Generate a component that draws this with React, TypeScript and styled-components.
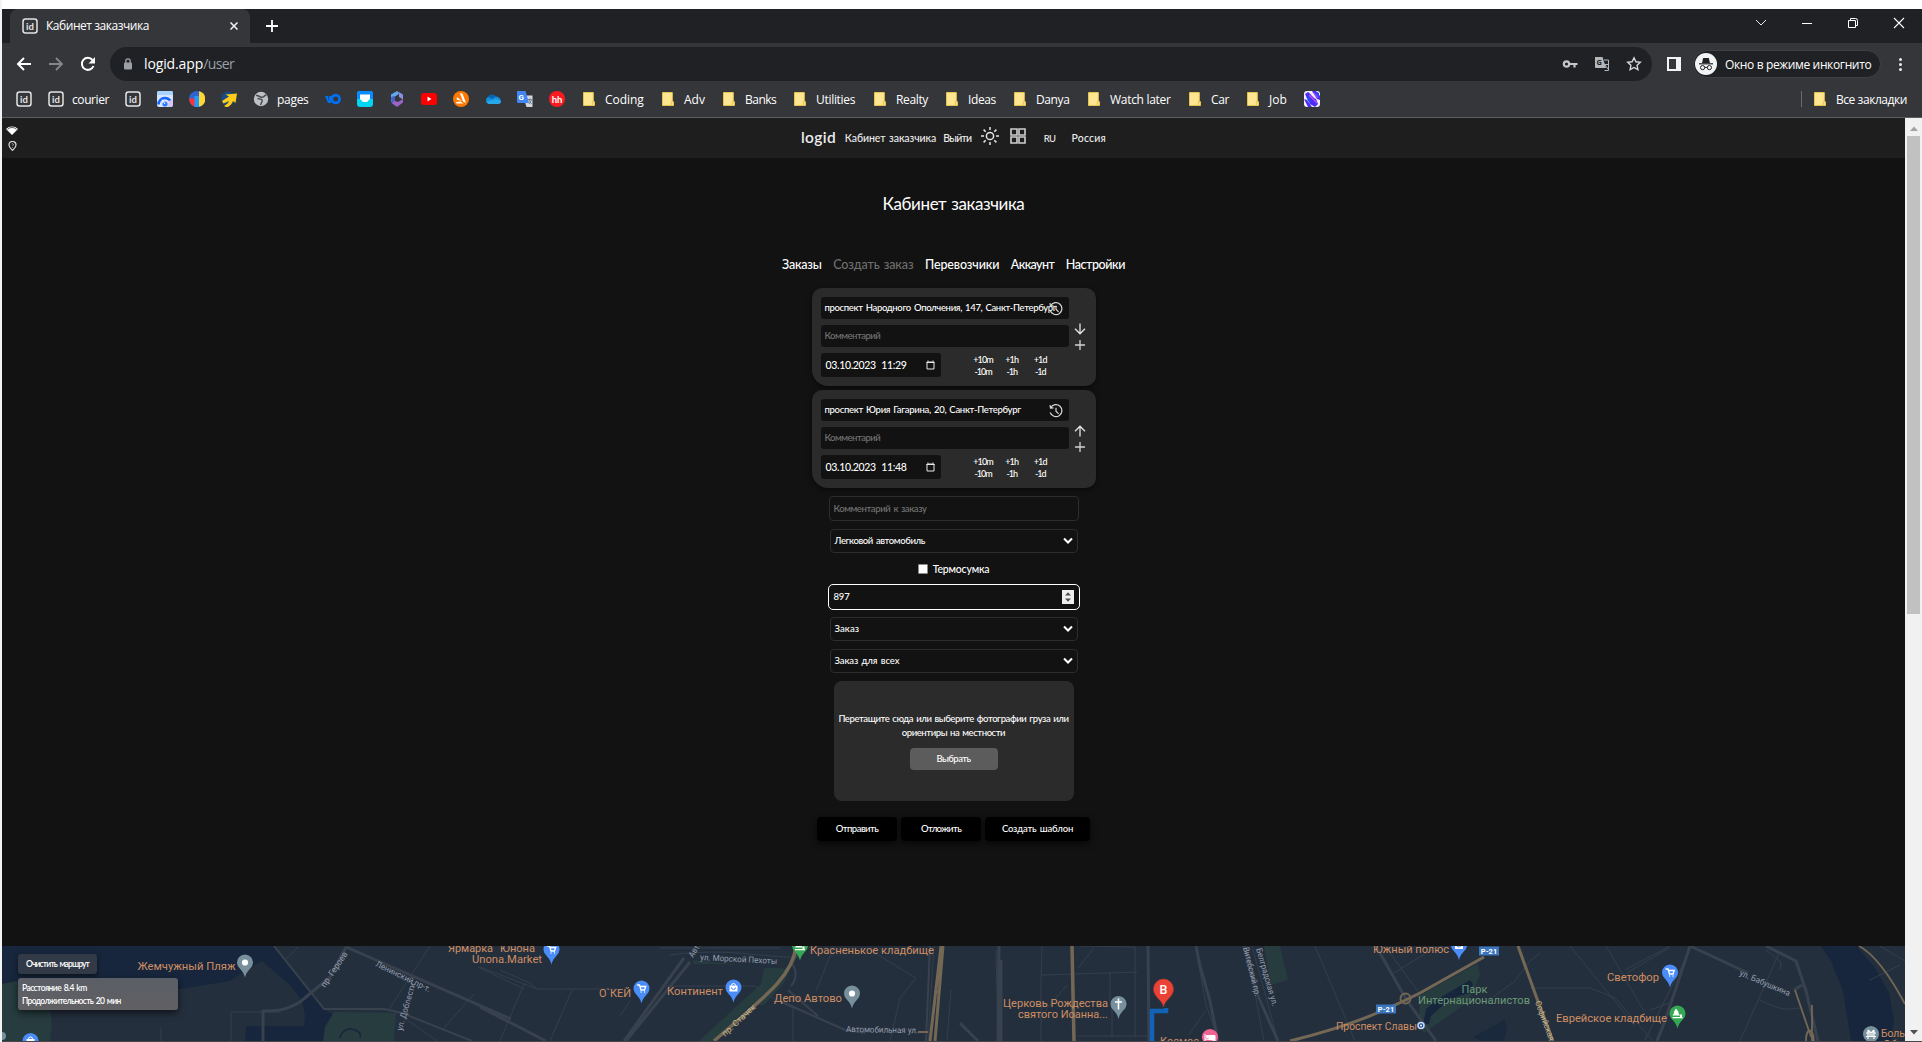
import React from "react";
import styled, { createGlobalStyle, css } from "styled-components";

const UI = '"Open Sans", "Noto Sans", sans-serif';
const GEO = 'Lato, "Open Sans", sans-serif';

const Global = createGlobalStyle`
  *, *::before, *::after { box-sizing: border-box; }
  html, body { margin: 0; background: #fff; overflow: hidden; }
  button { font: inherit; color: inherit; border: 0; background: none; padding: 0; margin: 0; }
  svg { display: block; flex: none; }
`;

const Window = styled.div`
  width: 1922px;
  height: 1042px;
  padding: 9px 0 0 2px;
  background: linear-gradient(90deg, #f3f3f3 2px, #fff 2px);
  display: flex;
  flex-direction: column;
  font-family: ${UI};
  color: #fff;
`;

const Text = styled.span<{ $size: number; $track?: number; $gap?: number; $w?: number; $color?: string }>`
  font-size: ${(p) => p.$size}px;
  letter-spacing: ${(p) => p.$track ?? 0}px;
  word-spacing: ${(p) => p.$gap ?? 0}px;
  color: ${(p) => p.$color ?? "inherit"};
  white-space: nowrap;
  ${(p) => p.$w && css`width: ${p.$w}px;`}
`;

/* ---------- browser chrome ---------- */

const TabStrip = styled.div`
  height: 34px;
  flex: none;
  background: #202124;
  display: flex;
  align-items: flex-start;
  padding-left: 8px;
`;

const Tab = styled.div`
  width: 240px;
  height: 34px;
  border-radius: 8px 8px 0 0;
  background: #35363a;
  display: flex;
  align-items: center;
  padding: 0 12px;
  gap: 8px;
`;

const TabTitle = styled(Text)`
  flex: 1;
  padding-bottom: 1px;
`;

const NewTab = styled.button`
  margin: 11px 0 0 16px;
`;

const WindowButtons = styled.div`
  margin: 7px 17px 0 auto;
  display: flex;
  gap: 34px;
  align-items: center;
`;

const Toolbar = styled.div`
  height: 38px;
  flex: none;
  background: #35363a;
  display: flex;
  align-items: center;
  padding: 4px 16px 0 14px;
`;

const NavButtons = styled.div`
  display: flex;
  gap: 16px;
  width: 94px;
`;

const Omnibox = styled.div`
  width: 1542px;
  height: 34px;
  border-radius: 17px;
  background: #202124;
  display: flex;
  align-items: center;
  padding: 0 10px 0 13px;
`;

const Url = styled.div`
  margin-left: 11px;
  padding-bottom: 1px;
  display: flex;
  flex: 1;
`;

const OmniIcons = styled.div`
  display: flex;
  gap: 16px;
  align-items: center;
`;

const SidePanel = styled.div`
  width: 14px;
  height: 14px;
  margin-left: 15px;
  border: 2px solid #f1f3f4;
  border-right-width: 5px;
`;

const Incognito = styled.div`
  height: 28px;
  width: 188px;
  margin-left: 12px;
  border: 1px solid #3f4043;
  border-radius: 14px;
  background: #202124;
  display: flex;
  align-items: center;
  gap: 8px;
`;

const Avatar = styled.div`
  width: 22px;
  height: 22px;
  margin-left: 1px;
  border-radius: 50%;
  background: #f1f3f4;
  display: grid;
  place-items: center;
`;

const Dots = styled.div`
  margin-left: auto;
  width: 4px;
  display: grid;
  gap: 2px;
  margin-right: 3px;
`;

const Dot = styled.i`
  width: 3px;
  height: 3px;
  border-radius: 50%;
  background: #e8eaed;
`;

const Bookmarks = styled.div`
  height: 37px;
  flex: none;
  background: #35363a;
  border-bottom: 1px solid #5c5d60;
  display: flex;
  align-items: center;
  gap: 16px;
  padding: 0 15px 0 14px;
`;

const Bookmark = styled.div`
  display: flex;
  align-items: center;
  gap: 8px;
`;

const AllBookmarks = styled.div`
  margin-left: auto;
  height: 16px;
  border-left: 1px solid #6a6b6e;
  padding-left: 10px;
  display: flex;
  align-items: center;
  gap: 8px;
`;

/* ---------- page ---------- */

const Viewport = styled.div`
  height: 924px;
  flex: none;
  display: flex;
  background: #121212;
  border-bottom: 1px solid #45474a;
`;

const Page = styled.div`
  width: 1903px;
  position: relative;
  display: flex;
  flex-direction: column;
  align-items: center;
  font-family: ${GEO};
  font-weight: 500;
`;

const Header = styled.header`
  width: 100%;
  height: 40px;
  flex: none;
  background: #1e1e1e;
  display: flex;
  justify-content: center;
  align-items: center;
  color: #ececec;
`;

const Status = styled.div`
  position: absolute;
  left: 4px;
  top: 8px;
  display: grid;
  gap: 6px;
  justify-items: center;
`;

const HeaderNav = styled.nav`
  display: flex;
  align-items: center;
  width: 305px;
  height: 40px;
`;

const Logo = styled(Text)`
  width: 44px;
  font-weight: 600;
  padding-bottom: 3px;
`;

const NavText = styled(Text)`
  padding-bottom: 1px;
`;

const NavIcon = styled.span<{ $w: number }>`
  width: ${(p) => p.$w}px;
  padding-bottom: 4px;
`;

const Lang = styled.button`
  width: 36px;
  padding: 0 0 0 8px;
  display: flex;
`;

const Title = styled.h1`
  margin: 34px 0 0;
  height: 24px;
  font: 400 17px/24px ${GEO};
  letter-spacing: -0.4px;
  word-spacing: 1px;
`;

const Tabs = styled.nav`
  margin-top: 38px;
  width: 343px;
  height: 21px;
  display: flex;
  align-items: center;
  justify-content: space-between;
`;

const Stops = styled.div`
  margin-top: 13px;
  display: grid;
  gap: 4px;
`;

const Stop = styled.section`
  width: 284px;
  height: 98px;
  padding: 9px 10px 9px 9px;
  border-radius: 10px 10px 10px 16px;
  background: #2b2b2b;
  box-shadow: 0 2px 5px rgba(0, 0, 0, 0.5);
  display: flex;
  gap: 5px;
`;

const StopFields = styled.div`
  width: 248px;
  display: flex;
  flex-direction: column;
  gap: 6px;
`;

const StopSide = styled.div`
  width: 12px;
  padding-top: 26px;
  display: grid;
  gap: 4px;
  align-content: start;
`;

const Field = styled.div`
  position: relative;
  height: 22px;
  border-radius: 3px;
  background: #121212;
  display: flex;
  align-items: center;
  padding: 0 4px 2px;
`;

const HistoryIcon = styled.span`
  position: absolute;
  right: 6px;
  top: 5px;
`;

const DateRow = styled.div`
  display: flex;
  align-items: center;
`;

const DateField = styled(Field)`
  width: 120px;
  height: 24px;
  justify-content: space-between;
  padding: 0 6px 1px 5px;
`;

const Shifts = styled.div`
  margin: 0 0 -2px 28px;
  display: grid;
  grid-template-columns: 29px 28.5px 28.5px;
  justify-items: center;
  line-height: 12.5px;
`;

const Form = styled.div`
  margin-top: 8px;
  width: 252px;
  display: flex;
  flex-direction: column;
  align-items: center;
`;

const Outlined = styled.div<{ $w: number; $h: number; $mt: number; $focus?: boolean }>`
  width: ${(p) => p.$w}px;
  height: ${(p) => p.$h}px;
  margin-top: ${(p) => p.$mt}px;
  border: ${(p) => (p.$focus ? "1.5px solid #fff" : "1px solid #2d2d2d")};
  border-radius: ${(p) => (p.$focus ? 5 : 4)}px;
  display: flex;
  align-items: center;
  justify-content: space-between;
  padding: ${(p) => (p.$focus ? "0 5px 1px" : "0 4px 1px")};
`;

const CheckLabel = styled.label`
  margin-top: 6px;
  height: 20px;
  display: flex;
  align-items: center;
  gap: 5px;
`;

const Box = styled.span`
  width: 10px;
  height: 10px;
  border-radius: 1px;
  background: #fff;
  border: 1px solid #8a8a8a;
`;

const Spinner = styled.span`
  width: 12px;
  height: 14px;
  background: #efefef;
  display: grid;
  place-items: center;
  margin-top: 1px;
`;

const Drop = styled.section`
  margin-top: 8px;
  width: 240px;
  height: 120px;
  border-radius: 8px;
  background: #2b2b2b;
  display: flex;
  flex-direction: column;
  align-items: center;
  padding-top: 31px;
  line-height: 14px;
`;

const Pick = styled.button`
  margin-top: 8px;
  width: 88px;
  height: 22px;
  padding-bottom: 1px;
  border-radius: 4px;
  background: #5c5c5c;
  display: flex;
  align-items: center;
  justify-content: center;
`;

const Actions = styled.div`
  margin-top: 16px;
  display: flex;
  gap: 4px;
`;

const Action = styled.button<{ $w: number }>`
  width: ${(p) => p.$w}px;
  height: 24px;
  padding-bottom: 1px;
  border-radius: 4px;
  background: #000;
  box-shadow: 0 3px 6px rgba(0, 0, 0, 0.6);
  display: flex;
  align-items: center;
  justify-content: center;
`;

const MapPane = styled.div`
  margin-top: auto;
  width: 1903px;
  height: 95px;
  flex: none;
  position: relative;
  overflow: hidden;
`;

const MapControls = styled.div`
  position: absolute;
  left: 16px;
  top: 8px;
  display: flex;
  flex-direction: column;
  align-items: flex-start;
  gap: 4px;
  font-weight: 600;
`;

const ClearRoute = styled.button`
  width: 79px;
  height: 20px;
  border-radius: 3px;
  background: #323a47;
  box-shadow: 0 2px 5px rgba(0, 0, 0, 0.5);
  display: flex;
  align-items: center;
  justify-content: center;
`;

const RouteInfo = styled.div`
  width: 160px;
  height: 32px;
  padding: 4px;
  border-radius: 3px;
  background: linear-gradient(#5a5e66, #616063);
  box-shadow: 0 3px 7px rgba(0, 0, 0, 0.6);
  display: grid;
  line-height: 12.500px;
`;

const Scrollbar = styled.div`
  width: 17px;
  background: #f1f1f1;
  display: flex;
  flex-direction: column;
  align-items: center;
  padding: 8px 0 6px;
`;

const Thumb = styled.div`
  width: 13px;
  height: 478px;
  margin: 5px 0 auto;
  background: #c1c1c1;
`;

/* ---------- icons ---------- */

const IdIcon = () => (
  <svg width="16" height="16" viewBox="0 0 16 16">
    <rect x="1" y="1" width="14" height="14" rx="2.500" fill="none" stroke="#e4e4e4" strokeWidth="1.500" />
    <text x="8" y="11.500" textAnchor="middle" fontFamily="Lato, sans-serif" fontWeight="700" fontSize="9.500" fill="#e4e4e4">id</text>
  </svg>
);

const Folder = () => (
  <svg width="16" height="16" viewBox="0 0 16 16">
    <path d="M2.500 1.500h9.800v9.200h1.200v3.800h-11z" fill="#ffe693" stroke="#e6c34f" />
    <path d="M11.300 14v-3.200h2" stroke="#e6c34f" fill="none" />
  </svg>
);

const marks: Record<string, React.ReactNode> = {
  gauge: (
    <>
      <rect width="16" height="16" rx="2" fill="#d7e6fb" />
      <path d="M0 2a2 2 0 0 1 2-2h12a2 2 0 0 1 2 2v2H0z" fill="#a9d2ff" />
      <path d="M1.500 13.500a6.500 6.500 0 0 1 13 0" fill="none" stroke="#1463ff" strokeWidth="2.600" />
      <path d="M12 10l4-2v6l-3 2h-2z" fill="#d9c4f7" />
      <circle cx="8" cy="13" r="2.600" fill="#2a7cff" />
      <path d="M8 13 5 8.500" stroke="#fff" />
    </>
  ),
  metrika: (
    <>
      <circle cx="8" cy="8" r="8" fill="#3065cf" />
      <path d="M10 .2a8 8 0 0 1 0 15.600z" fill="#ffd633" />
      <path d="M.2 7.500H6v8.200A8 8 0 0 1 .2 7.500z" fill="#ff3333" />
      <path d="M5.500 5h4.500v11H5.500z" fill="#1f9bff" />
    </>
  ),
  arrow: (
    <>
      <circle cx="7" cy="7.500" r="7" fill="#174a80" />
      <path d="M4.500 3.500l11.500-1-1.500 9.500-2.500-2c-1 3-3 5-6 6.500L3 15c3-1.500 4-3 5-5l-5.500 2.500L1 10l7-4.500z" fill="#ffcc1a" />
    </>
  ),
  globe: (
    <>
      <circle cx="8" cy="8" r="7.200" fill="#bdc1c6" />
      <path d="M3 4.500c3.500-.5 3 2 6 1.800s2-2.300 4.500-2.300M4.500 7.500c3 .5 5.500.5 4.500 3l-1.500 3.500" fill="none" stroke="#4a4b4f" strokeWidth="1.500" />
    </>
  ),
  yoo: (
    <>
      <path d="M0 5h3l1 6V5h2v7H3z" fill="#0070f0" />
      <circle cx="10.700" cy="8" r="3.900" fill="none" stroke="#0070f0" strokeWidth="2.800" />
    </>
  ),
  mail: (
    <>
      <rect width="16" height="16" rx="3" fill="#00d5f2" />
      <path d="M0 8V3a3 3 0 0 1 3-3h10a3 3 0 0 1 3 3v5z" fill="#0a8bff" />
      <path d="M3 3.500h10v4.500l-3 3H6L3 8z" fill="#fff" />
    </>
  ),
  m365: (
    <>
      <path d="M8 0 2 3.500v7L6 13V5.500L10 3z" fill="#62a8ef" />
      <path d="M8 0l6 3.500v5L10 6V3z" fill="#8b8fe0" />
      <path d="M14 8v3.500L8 16 2.500 12 6 10l3 1 5-3z" fill="#9a63c9" />
      <path d="M2 6l4-1v5l-3.500 2z" fill="#4660c9" />
    </>
  ),
  youtube: (
    <>
      <rect y="2" width="16" height="12" rx="3" fill="#f00" />
      <path d="M6.500 5.500v5l4-2.500z" fill="#fff" />
    </>
  ),
  avast: (
    <>
      <circle cx="8" cy="8" r="8" fill="#ff7800" />
      <path d="M7 2.500c1.500-.5 2.500 0 3 1.500l3 8-3-1.500zM4 6l5 4-5.500-1.500zM3 11l4.500-.5 3 2H3.500z" fill="#fff" />
    </>
  ),
  cloud: (
    <>
      <path d="M3.500 12.500A3.500 3.500 0 0 1 3 6a5 5 0 0 1 8-.5c3 0 5 3 5 4.500s-1 3-3 3z" fill="#1490df" />
      <path d="M3 6a5 5 0 0 1 8-.5L7 8z" fill="#0364b8" />
      <path d="M1 11l10-3 5 2c0 2-1 3-3 3H3.500z" fill="#28a8ea" />
    </>
  ),
  translate: (
    <>
      <path d="M6 4.500h9.500V16H9.500z" fill="#d5d7da" />
      <path d="M0 0h8.500L12 12H1a1 1 0 0 1-1-1z" fill="#4285f4" />
      <text x="1.600" y="9" fontSize="8" fontWeight="700" fontFamily="Roboto, sans-serif" fill="#fff">G</text>
      <path d="M11 8.500h4M13 7.500v1M12 9l2.500 4M14.500 9L12 13" stroke="#6b7a86" fill="none" strokeWidth=".9" />
    </>
  ),
  hh: (
    <>
      <circle cx="8" cy="8" r="8" fill="#fc1a20" />
      <text x="8" y="11.500" textAnchor="middle" fontSize="9.500" fontFamily="Lato, sans-serif" fontWeight="700" fill="#fff">hh</text>
    </>
  ),
  swirl: (
    <>
      <rect width="16" height="16" rx="3" fill="#f3efff" />
      <path d="M1 3l3-2c3 2 5 6 8 7l2 5-3 3-5-3zM8 0h4l4 5v4l-3-1zM0 8l3 1 5 7H4z" fill="#4a2cf5" />
      <path d="M13 1l2 1v5l-3-3zM2 5l3 1 3 6-4-2z" fill="#2b49ff" />
      <path d="M5 4l8 8M10 2l4 5" stroke="#c04bff" strokeWidth="1.200" />
    </>
  ),
};

const Mark = ({ name }: { name: string }) => (
  <svg width="16" height="16" viewBox="0 0 16 16">{marks[name]}</svg>
);

const History = () => (
  <svg width="14" height="14" viewBox="0 0 14 14" fill="none" stroke="#d8d8d8" strokeWidth="1.200">
    <path d="M1.600 3.800A6 6 0 1 1 1.200 8.500M1 1.200l.5 3 3-.4M7 3.800v3.400l2.600 2.600" />
  </svg>
);

const Calendar = () => (
  <svg width="9" height="10" viewBox="0 0 9 10">
    <path d="M1 2h7v7H1zM.5 2.500h8" fill="none" stroke="#e8e8e8" />
    <path d="M2 0.500v1M7 0.500v1" stroke="#e8e8e8" />
  </svg>
);

const Arrow = ({ up }: { up?: boolean }) => (
  <svg width="12" height="12" viewBox="0 0 12 12" fill="none" stroke="#e4e4e4" strokeWidth="1.300">
    <path d={up ? "M6 11.500V1.500M1 6.200l5-5 5 5" : "M6 .5v10M1 5.800l5 5 5-5"} />
  </svg>
);

const Plus = () => (
  <svg width="12" height="12" viewBox="0 0 12 12">
    <path d="M6 1v10M1 6h10" stroke="#d4d4d4" strokeWidth="1.300" />
  </svg>
);

const Chevron = () => (
  <svg width="10" height="7" viewBox="0 0 10 7">
    <path d="M1 1.500l4 4 4-4" fill="none" stroke="#fff" strokeWidth="2" />
  </svg>
);

const Caret = ({ down }: { down?: boolean }) => (
  <svg width="8" height="5" viewBox="0 0 8 5">
    <path d={down ? "M0 0h8L4 4.500z" : "M0 5h8L4 .5z"} fill={down ? "#505050" : "#a3a3a3"} />
  </svg>
);

/* ---------- map ---------- */

type PinProps = { x: number; y: number; color: string; glyph: "cart" | "bag" | "dot" | "cross" | "tree" | "bed" | "bridge" };

const glyphs = {
  cart: <path d="M-4-3.500h2l1.500 5H3L4.200-2H-1M-.5 3.500h.1M3 3.500h.1" fill="none" stroke="#fff" strokeWidth="1.300" strokeLinecap="round" />,
  bag: (
    <>
      <rect x="-4" y="-2" width="8" height="6" fill="#fff" />
      <path d="M-2-2a2 2 0 0 1 4 0" fill="none" stroke="#fff" />
      <path d="M-2 0a2 2 0 0 0 4 0" fill="none" stroke="#4b8df8" />
    </>
  ),
  dot: <circle r="3.100" fill="#fff" />,
  cross: <path d="M0-5.500v11M-3.500-2h7" stroke="#fff" strokeWidth="1.500" />,
  tree: <path d="M-1.500-5l3 4h-1l2 3H-5l2-3h-1zM-5 3.500H5v1.200H-5zM2.500 1h2v3h-2z" fill="#fff" />,
  bed: <path d="M-5-3v7M-5 2H5v2M-3.500-1.500h2v2h-2zM-1-1.500h6V2h-6z" fill="#fff" stroke="#fff" />,
  bridge: <path d="M-5-1h10M-5 2.500h10M-3-4v9M3-4v9M-3-4l3 3 3-3M-1 0v2M1 0v2" fill="none" stroke="#fff" strokeWidth="1.200" />,
};

const Pin = ({ x, y, color, glyph }: PinProps) => (
  <g transform={`translate(${x} ${y})`}>
    <path d="M0 15C-1 11-2 9.500-5 6.200A8 8 0 1 1 5 6.200C2 9.500 1 11 0 15z" fill={color} />
    {glyphs[glyph]}
  </g>
);

const places: [string, number, number, number][] = [
  ["Жемчужный Пляж", 137.5, 970, 98],
  ["Ярмарка", 448, 952, 45],
  ["Юнона", 500, 952, 35],
  ["Unona.Market", 472, 963, 70],
  ["О`КЕЙ", 599, 996.5, 32],
  ["Континент", 667, 995, 56],
  ["Депо Автово", 774, 1001.5, 68],
  ["Красненькое кладбище", 810, 953.5, 124],
  ["Церковь Рождества", 1003, 1006.5, 105],
  ["святого Иоанна...", 1018, 1017.5, 90],
  ["Космос", 1160, 1045, 39],
  ["Южный полюс", 1373, 952.5, 76],
  ["Проспект Славы", 1336, 1029.5, 81],
  ["Светофор", 1607, 981, 52],
  ["Еврейское кладбище", 1556, 1021.5, 111],
  ["Боль", 1881, 1037, 24],
  ["Об", 1883, 1048, 14],
];

const streets: [string, number, number, number, number, string?][] = [
  ["пр. Героев", 325, 988, 41, -56],
  ["Ленинский пр-т.", 375, 966, 60, 26],
  ["ул. Доблести", 402, 1031, 49, -74],
  ["Авто", 693, 958, 17, -58],
  ["ул. Морской Пехоты", 700, 960, 77, 3],
  ["пр. Стачек", 725, 1037, 43, -43, "#c9b78f"],
  ["Автомобильная ул.", 846, 1032, 72, 1],
  ["Витебский пр.", 1243, 948, 50, 76],
  ["Белградская ул.", 1256, 949, 60, 74],
  ["Софийская", 1535, 1002, 42, 70, "#c9b78f"],
  ["ул. Бабушкина", 1739, 975, 54, 23],
];

const MapCanvas = () => (
  <svg width="1903" height="95" viewBox="2 946 1903 95" fontFamily="Roboto, sans-serif" fontWeight="400">
    <rect x="2" y="946" width="1903" height="95" fill="#242f3e" />
    <g fill="#17263c">
      <path d="M2 946h272l11 16 16 17 24 31 9 5-7 10v16h-82l1-15h58l1-10-3-15-12-16-28-24-14 8-18 12-50 8-50-1-20-3-30-6-20 3-40-5-18 16z" />
      <path d="M2 952h24l15 12-12 18-27 12z" />
      <path d="M1821 946h36l18 22 14 25 5 28-3 20h-40l-8-50-12-30z" />
      <path d="M1497 1024l8-5 2 12-4 10h-22l-8-4z" opacity=".7" />
    </g>
    <g fill="#263c3f">
      <path d="M2 984l15-3 6 15 26 8 3 20-2 17H2z" />
      <path d="M334 1012l62 1-2 28h-71l2-14z" />
      <path d="M764 968h12l14 1-6 14-20 22-14 1-37 35h-14l62-57zM692 960l50 5-28-1-20 0z" />
      <path d="M1264 946h16l8 34-17 5z" />
      <path d="M1421 995l57-32 2 12-12 27-44 31-6-10z" />
    </g>
    <path d="M1470 980l3 4-3 9-18 5-10 8-11 10-2 8-6 1 3-16 12-10z" fill="#17263c" />
    <path d="M340 1038c2-9 9-10 15-8s6 5 5 8" fill="none" stroke="#17263c" strokeWidth="1.500" />
    <g fill="none" stroke="#343f4d" strokeWidth="1">
      <path d="M231 1041v-29h50M161 1028v13M285 960l13-13M430 946l-42 65M400 1015l100 70M442 1030l32-36M478 967l46 22M480 967l57 22h80M524 984l-24 57M572 990l-22 51M500 970l30 13 6 5M620 1016l10-15M665 986h90l18 12 20 10v33" />
      <path d="M660 948h120M670 955c60-8 90 3 130 2M834 946l-18 45M870 950l46 28-16 20-10 43M934 946l-6 95M951 990l-4 50M996 950l2 91M1042 946l-1 34v61M1042 975l95-3M1077 1036h71M1080 946l55 1v90M1078 968l16-20M1110 972v30M1112 1003v35M1067 985l-22 26" />
      <path d="M1196 950l10 55 13 36M1206 1010l-17 25M1246 946l18 95M1252 946l26 95M1315 946l40 95M1385 946l40 55M1394 973l40-25 10-2" />
      <path d="M1485 1003l30-22 15-20 10-8M1530 988h60l25 10 38 43M1570 946l65 80M1606 946l38 65M1625 970l45-24M1627 973l42-25M1650 1010l19-7M1690 950l-45 90M1740 1041l40-90M1760 1000c20 10 24 10 40 8M1766 950l15 12-1 8M1870 980l30-15M1880 946l25 15" />
    </g>
    <g fill="none" stroke="#38414e" strokeWidth="3" strokeLinejoin="round">
      <path d="M346 947l165 72M346 947l-16 30-30 25c-15 9-25 9-37 9v30" />
      <path d="M274 946l50 63h60l18 4 70 28" strokeWidth="2" />
      <path d="M480 1007l66 34M684 958l-60 83M690 962l-64 79" />
      <path d="M780 1001l65 29 20 3M788 990l30 26" strokeWidth="2" />
      <path d="M999 946l-1 95M1001 960v81M1148 946l1 95M1196 946l4 20 10 35 8 40M1278 1041l-20-45-14-50M960 1023l18 18" />
      <path d="M1376 946l30 53 30 42M1690 946l-25 75-8 20M1690 946l58 27M1766 946l30 15 10 30 12 50M1794 990l8-5" />
      <path d="M930 946l-4 95" strokeWidth="2" />
      <path d="M802 946l-10 18c5 6 5 15-1 22" strokeWidth="2" />
    </g>
    <g fill="none" stroke="#746855" strokeWidth="3.500">
      <path d="M796 946c-3 30-30 50-82 95M1072 946l2 95" />
      <path d="M941 946l-11 95M943 946l-8 95M1290 1041c60-15 90-28 130-48l64-36M1518 946l18 50 17 45" strokeWidth="3" />
      <path d="M918 1032h10M934 992h6M1859 946c15 8 30 28 46 58M1795 990l14 41 4 10M1812 1005v36M1806 1041c0-14 7-14 8 0" strokeWidth="1.800" />
      <circle cx="1405.500" cy="998.500" r="5" strokeWidth="2" />
    </g>
    <path d="M1152 1041v-30h14v-3" fill="none" stroke="#1263b5" strokeWidth="4.500" />
    <g fontSize="11.500" fill="#cf8e61">
      {places.map(([t, x, y, w]) => (
        <text key={t} x={x} y={y} textLength={w} lengthAdjust="spacingAndGlyphs">{t}</text>
      ))}
    </g>
    <g fontSize="8.500">
      {streets.map(([t, x, y, w, r, c]) => (
        <text key={t} fill={c ?? "#949eac"} transform={`translate(${x} ${y}) rotate(${r})`} textLength={w} lengthAdjust="spacingAndGlyphs">{t}</text>
      ))}
    </g>
    <g fontSize="11.500" fill="#6b9a76">
      <text x="1461.500" y="993" textLength="26" lengthAdjust="spacingAndGlyphs">Парк</text>
      <text x="1418" y="1004" textLength="112" lengthAdjust="spacingAndGlyphs">Интернационалистов</text>
    </g>
    {[[1376, 1004.5], [1479, 946.5]].map(([x, y]) => (
      <g key={x}>
        <rect x={x} y={y} width="20" height="9" fill="#3b75bd" />
        <text x={x + 10} y={y + 7.3} fontSize="7.500" fontWeight="700" fill="#fff" textAnchor="middle">Р-21</text>
      </g>
    ))}
    <circle cx="1421" cy="1025.500" r="3" fill="#1e4f94" stroke="#c6dcff" strokeWidth="1.500" />
    <circle cx="1421" cy="1025.500" r="1" fill="#fff" />
    <circle cx="2" cy="1036" r="4" fill="#78909c" />
    <Pin x={245} y={962.5} color="#78909c" glyph="dot" />
    <Pin x={30.5} y={1041} color="#4b8df8" glyph="bag" />
    <Pin x={551.5} y={949.5} color="#4b8df8" glyph="cart" />
    <Pin x={641.5} y={988.5} color="#4b8df8" glyph="cart" />
    <Pin x={733.5} y={987.5} color="#4b8df8" glyph="bag" />
    <Pin x={800} y={945.5} color="#34a853" glyph="tree" />
    <Pin x={852} y={993.5} color="#78909c" glyph="dot" />
    <Pin x={1118.5} y={1004} color="#78909c" glyph="cross" />
    <Pin x={1210} y={1037} color="#f06292" glyph="bed" />
    <Pin x={1459} y={945} color="#4b8df8" glyph="bag" />
    <Pin x={1670} y={972.5} color="#4b8df8" glyph="cart" />
    <Pin x={1677.5} y={1013.5} color="#34a853" glyph="tree" />
    <Pin x={1871} y={1034} color="#78909c" glyph="bridge" />
    <path d="M1163.500 1007c-1-7-10-10-10-18a10 10 0 0 1 20 0c0 8-9 11-10 18z" fill="#ea4335" stroke="#b6362b" strokeWidth=".6" />
    <text x="1163.500" y="993.500" fontSize="12.500" fontWeight="500" fill="#fff" textAnchor="middle">B</text>
  </svg>
);

/* ---------- content ---------- */

type Entry = { icon: string; label?: string; w?: number; track?: number };
const bookmarks: Entry[] = [
  { icon: "id" },
  { icon: "id", label: "courier", w: 37, track: -0.42 },
  { icon: "id" },
  { icon: "gauge" },
  { icon: "metrika" },
  { icon: "arrow" },
  { icon: "globe", label: "pages", w: 32, track: -0.3 },
  { icon: "yoo" },
  { icon: "mail" },
  { icon: "m365" },
  { icon: "youtube" },
  { icon: "avast" },
  { icon: "cloud" },
  { icon: "translate" },
  { icon: "hh" },
  { icon: "folder", label: "Coding", w: 39, track: -0.05 },
  { icon: "folder", label: "Adv", w: 21, track: 0 },
  { icon: "folder", label: "Banks", w: 31, track: -0.5 },
  { icon: "folder", label: "Utilities", w: 40, track: -0.3 },
  { icon: "folder", label: "Realty", w: 32, track: -0.36 },
  { icon: "folder", label: "Ideas", w: 28, track: -0.37 },
  { icon: "folder", label: "Danya", w: 34, track: -0.4 },
  { icon: "folder", label: "Watch later", w: 61, track: -0.3 },
  { icon: "folder", label: "Car", w: 18, track: -0.38 },
  { icon: "folder", label: "Job", w: 19, track: 0.07 },
  { icon: "swirl" },
];

const BookmarkIcon = ({ name }: { name: string }) =>
  name === "id" ? <IdIcon /> : name === "folder" ? <Folder /> : <Mark name={name} />;

const shifts: [string, number][] = [
  ["+10m", -0.85], ["+1h", -0.8], ["+1d", -0.8],
  ["-10m", -1], ["-1h", -1.1], ["-1d", -1.1],
];

const StopCard = ({ address, track, date, up }: { address: string; track: number; date: string; up?: boolean }) => (
  <Stop>
    <StopFields>
      <Field>
        <Text $size={9.5} $track={track} $gap={1}>{address}</Text>
        <HistoryIcon><History /></HistoryIcon>
      </Field>
      <Field><Text $size={9.5} $track={-0.49} $color="#757575">Комментарий</Text></Field>
      <DateRow>
        <DateField>
          <Text $size={10.5} $track={-0.33} $gap={3}>{date}</Text>
          <Calendar />
        </DateField>
        <Shifts>
          {shifts.map(([t, tr]) => <Text key={t} $size={9} $track={tr}>{t}</Text>)}
        </Shifts>
      </DateRow>
    </StopFields>
    <StopSide><Arrow up={up} /><Plus /></StopSide>
  </Stop>
);

export default function App() {
  return (
    <Window>
      <Global />
      <TabStrip>
        <Tab>
          <IdIcon />
          <TabTitle $size={12} $track={-0.46}>Кабинет заказчика</TabTitle>
          <svg width="8" height="8" viewBox="0 0 8 8"><path d="M.5.5l7 7M7.500.5l-7 7" stroke="#f1f3f4" strokeWidth="1.500" /></svg>
        </Tab>
        <NewTab>
          <svg width="12" height="12" viewBox="0 0 12 12"><path d="M6 0v12M0 6h12" stroke="#fff" strokeWidth="1.800" /></svg>
        </NewTab>
        <WindowButtons>
          <svg width="12" height="14" viewBox="0 0 12 14"><path d="M1 4l5 5 5-5" fill="none" stroke="#e8eaed" /></svg>
          <svg width="12" height="14" viewBox="0 0 12 14"><path d="M1 7.500h10" stroke="#fff" /></svg>
          <svg width="12" height="14" viewBox="0 0 12 14"><path d="M1.500 4.500h7v7h-7zM3.500 4V2.500h5a2 2 0 0 1 2 2v5H9" fill="none" stroke="#fff" /></svg>
          <svg width="12" height="14" viewBox="0 0 12 14"><path d="M1 2l10 10M11 2L1 12" stroke="#fff" strokeWidth="1.100" /></svg>
        </WindowButtons>
      </TabStrip>

      <Toolbar>
        <NavButtons>
          <svg width="16" height="16" viewBox="0 0 16 16"><path d="M15 8H2M8 2L2 8l6 6" fill="none" stroke="#fff" strokeWidth="2" /></svg>
          <svg width="16" height="16" viewBox="0 0 16 16"><path d="M1 8h13M8 2l6 6-6 6" fill="none" stroke="#85868a" strokeWidth="1.800" /></svg>
          <svg width="16" height="16" viewBox="0 0 16 16"><path d="M13.500 10A6 6 0 1 1 12.500 4" fill="none" stroke="#fff" strokeWidth="2" /><path d="M15 1v6.500H8.500z" fill="#fff" /></svg>
        </NavButtons>
        <Omnibox>
          <svg width="10" height="12" viewBox="0 0 10 12"><rect x="1" y="4.500" width="8" height="7" rx="1" fill="#9aa0a6" /><path d="M2.800 5V3a2.200 2.200 0 0 1 4.400 0v2" fill="none" stroke="#9aa0a6" strokeWidth="1.300" /></svg>
          <Url>
            <Text $size={14} $track={-0.12}>logid.app</Text>
            <Text $size={14} $track={-0.6} $color="#9aa0a6">/user</Text>
          </Url>
          <OmniIcons>
            <svg width="16" height="14" viewBox="0 0 16 14"><circle cx="4.500" cy="7" r="2.700" fill="none" stroke="#c4c7c9" strokeWidth="2.200" /><path d="M7 7h8.500M12.500 7v3.500" stroke="#c4c7c9" strokeWidth="2.200" /></svg>
            <svg width="16" height="16" viewBox="0 0 16 16"><path d="M1 1h7.500l3.500 11H2a1 1 0 0 1-1-1z" fill="#b5b8bb" /><path d="M10 4h4.500v10.500h-4M10.500 8.500h4M11 9l3 4" fill="none" stroke="#b5b8bb" /><text x="2.500" y="9" fontSize="7.500" fontWeight="700" fill="#202124">G</text></svg>
            <svg width="16" height="16" viewBox="0 0 16 16"><path d="M8 1.800l1.900 4 4.400.5-3.200 3 .8 4.400L8 11.500l-3.900 2.200.8-4.400-3.200-3 4.400-.5z" fill="none" stroke="#d5d7da" strokeWidth="1.400" /></svg>
          </OmniIcons>
        </Omnibox>
        <SidePanel />
        <Incognito>
          <Avatar>
            <svg width="14" height="14" viewBox="0 0 14 14"><path d="M4.200 1h5.600l1.200 5H3z" fill="#202124" /><path d="M0 6.800h14" stroke="#202124" strokeWidth="1.200" /><circle cx="3.600" cy="10.600" r="2.100" fill="none" stroke="#202124" /><circle cx="10.400" cy="10.600" r="2.100" fill="none" stroke="#202124" /><path d="M5.700 10.400h2.600" stroke="#202124" /></svg>
          </Avatar>
          <Text $size={12} $track={-0.36}>Окно в режиме инкогнито</Text>
        </Incognito>
        <Dots><Dot /><Dot /><Dot /></Dots>
      </Toolbar>

      <Bookmarks>
        {bookmarks.map((b, i) => (
          <Bookmark key={i}>
            <BookmarkIcon name={b.icon} />
            {b.label && <Text $size={12} $w={b.w} $track={b.track}>{b.label}</Text>}
          </Bookmark>
        ))}
        <AllBookmarks>
          <Folder />
          <Text $size={12} $track={-0.44}>Все закладки</Text>
        </AllBookmarks>
      </Bookmarks>

      <Viewport>
        <Page>
          <Header>
            <HeaderNav>
              <Logo $size={15.5} $track={0.35}>logid</Logo>
              <NavText $size={10.5} $track={-0.07} $gap={1} $w={99}>Кабинет заказчика</NavText>
              <NavText $size={10.5} $track={-0.7} $w={38}>Выйти</NavText>
              <NavIcon $w={29}>
                <svg width="18" height="18" viewBox="0 0 18 18" fill="none" stroke="#e6e6e6" strokeWidth="1.500"><circle cx="9" cy="9" r="3.600" /><path d="M9 0v3M9 15v3M0 9h3M15 9h3M2.600 2.600l2.100 2.100M13.300 13.300l2.100 2.100M2.600 15.400l2.100-2.100M13.300 4.700l2.100-2.100" /></svg>
              </NavIcon>
              <NavIcon $w={26}>
                <svg width="16" height="16" viewBox="0 0 16 16" fill="none" stroke="#d0d0d0" strokeWidth="1.600"><path d="M1 1h6v6H1zM9 1h6v6H9zM1 9h6v6H1zM9 9h6v6H9z" /></svg>
              </NavIcon>
              <Lang><Text $size={9.5} $track={-0.7}>RU</Text></Lang>
              <NavText $size={10.5} $track={0.2}>Россия</NavText>
            </HeaderNav>
          </Header>
          <Status>
            <svg width="12" height="9" viewBox="0 0 12 9"><path d="M0 3a8.500 8.500 0 0 1 12 0L6 9z" fill="#fff" /><path d="M1.500 3.300a6.500 6.500 0 0 1 9 0" stroke="#333" fill="none" strokeWidth=".8" /></svg>
            <svg width="9" height="10" viewBox="0 0 9 10"><path d="M4.500 9.500C3.500 8 1 6.500 1 4a3.500 3.500 0 0 1 7 0c0 2.500-2.500 4-3.500 5.500z" fill="none" stroke="#d8d8d8" strokeWidth="1.200" /><path d="M3.500 3.200c.5-1 2.200-.5 1.800.6L4.500 5M4.500 6v.7" fill="none" stroke="#c4c4c4" strokeWidth=".8" /></svg>
          </Status>

          <Title>Кабинет заказчика</Title>
          <Tabs>
            <Text $size={12.5} $track={-0.2}>Заказы</Text>
            <Text $size={12.5} $track={-0.08} $gap={1} $color="#6f6f6f">Создать заказ</Text>
            <Text $size={12.5} $track={-0.12}>Перевозчики</Text>
            <Text $size={12.5} $track={-0.6}>Аккаунт</Text>
            <Text $size={12.5} $track={-0.42}>Настройки</Text>
          </Tabs>

          <Stops>
            <StopCard address="проспект Народного Ополчения, 147, Санкт-Петербург" track={-0.34} date="03.10.2023 11:29" />
            <StopCard address="проспект Юрия Гагарина, 20, Санкт-Петербург" track={-0.3} date="03.10.2023 11:48" up />
          </Stops>

          <Form>
            <Outlined $w={250} $h={25} $mt={0}><Text $size={9.5} $track={-0.39} $gap={1} $color="#757575">Комментарий к заказу</Text></Outlined>
            <Outlined $w={248} $h={24} $mt={8}><Text $size={9.5} $track={-0.39} $gap={1}>Легковой автомобиль</Text><Chevron /></Outlined>
            <CheckLabel><Box /><Text $size={10.5} $track={-0.2}>Термосумка</Text></CheckLabel>
            <Outlined $w={252} $h={26} $mt={5} $focus>
              <Text $size={9.5} $track={-0.17}>897</Text>
              <Spinner>
                <svg width="6" height="10" viewBox="0 0 6 10"><path d="M0 3.500h6L3 .3zM0 6.500h6L3 9.700z" fill="#505050" /></svg>
              </Spinner>
            </Outlined>
            <Outlined $w={248} $h={24} $mt={7}><Text $size={9.5} $track={0.1}>Заказ</Text><Chevron /></Outlined>
            <Outlined $w={248} $h={24} $mt={8}><Text $size={9.5} $track={-0.09} $gap={1}>Заказ для всех</Text><Chevron /></Outlined>
            <Drop>
              <Text $size={9.5} $track={-0.42} $gap={1}>Перетащите сюда или выберите фотографии груза или</Text>
              <Text $size={9.5} $track={-0.43} $gap={1}>ориентиры на местности</Text>
              <Pick><Text $size={9.5} $track={-0.53}>Выбрать</Text></Pick>
            </Drop>
          </Form>
          <Actions>
            <Action $w={80}><Text $size={9.5} $track={-0.53}>Отправить</Text></Action>
            <Action $w={80}><Text $size={9.5} $track={-0.63}>Отложить</Text></Action>
            <Action $w={105}><Text $size={9.5} $track={-0.16} $gap={1}>Создать шаблон</Text></Action>
          </Actions>

          <MapPane>
            <MapCanvas />
            <MapControls>
              <ClearRoute><Text $size={8.5} $track={-0.85} $gap={1}>Очистить маршрут</Text></ClearRoute>
              <RouteInfo>
                <Text $size={8.5} $track={-0.58} $gap={1}>Расстояние 8.4 km</Text>
                <Text $size={8.5} $track={-0.66} $gap={1}>Продолжительность 20 мин</Text>
              </RouteInfo>
            </MapControls>
          </MapPane>
        </Page>
        <Scrollbar>
          <Caret />
          <Thumb />
          <Caret down />
        </Scrollbar>
      </Viewport>
    </Window>
  );
}
